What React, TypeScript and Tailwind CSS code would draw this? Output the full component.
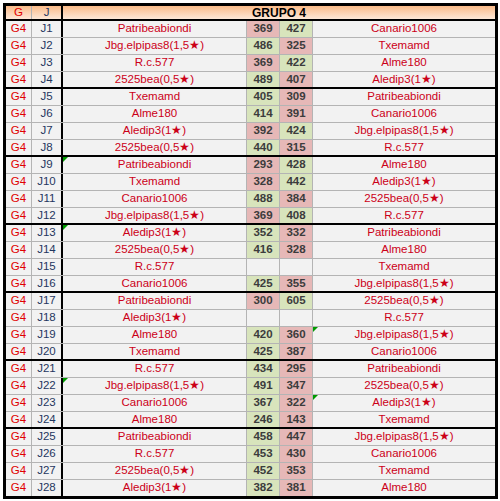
type Match = {
  j: number;
  home: string;
  a?: number;
  b?: number;
  away: string;
  markHome?: boolean;
  markAway?: boolean;
};

const matches: Match[] = [
  { j: 1, home: "Patribeabiondi", a: 369, b: 427, away: "Canario1006" },
  { j: 2, home: "Jbg.elpipas8(1,5★)", a: 486, b: 325, away: "Txemamd" },
  { j: 3, home: "R.c.577", a: 369, b: 422, away: "Alme180" },
  { j: 4, home: "2525bea(0,5★)", a: 489, b: 407, away: "Aledip3(1★)" },
  { j: 5, home: "Txemamd", a: 405, b: 309, away: "Patribeabiondi" },
  { j: 6, home: "Alme180", a: 414, b: 391, away: "Canario1006" },
  { j: 7, home: "Aledip3(1★)", a: 392, b: 424, away: "Jbg.elpipas8(1,5★)" },
  { j: 8, home: "2525bea(0,5★)", a: 440, b: 315, away: "R.c.577" },
  { j: 9, home: "Patribeabiondi", a: 293, b: 428, away: "Alme180", markHome: true },
  { j: 10, home: "Txemamd", a: 328, b: 442, away: "Aledip3(1★)" },
  { j: 11, home: "Canario1006", a: 488, b: 384, away: "2525bea(0,5★)" },
  { j: 12, home: "Jbg.elpipas8(1,5★)", a: 369, b: 408, away: "R.c.577" },
  { j: 13, home: "Aledip3(1★)", a: 352, b: 332, away: "Patribeabiondi", markHome: true },
  { j: 14, home: "2525bea(0,5★)", a: 416, b: 328, away: "Alme180" },
  { j: 15, home: "R.c.577", away: "Txemamd" },
  { j: 16, home: "Canario1006", a: 425, b: 355, away: "Jbg.elpipas8(1,5★)" },
  { j: 17, home: "Patribeabiondi", a: 300, b: 605, away: "2525bea(0,5★)" },
  { j: 18, home: "Aledip3(1★)", away: "R.c.577" },
  { j: 19, home: "Alme180", a: 420, b: 360, away: "Jbg.elpipas8(1,5★)", markAway: true },
  { j: 20, home: "Txemamd", a: 425, b: 387, away: "Canario1006" },
  { j: 21, home: "R.c.577", a: 434, b: 295, away: "Patribeabiondi" },
  { j: 22, home: "Jbg.elpipas8(1,5★)", a: 491, b: 347, away: "2525bea(0,5★)", markHome: true },
  { j: 23, home: "Canario1006", a: 367, b: 322, away: "Aledip3(1★)", markAway: true },
  { j: 24, home: "Alme180", a: 246, b: 143, away: "Txemamd" },
  { j: 25, home: "Patribeabiondi", a: 458, b: 447, away: "Jbg.elpipas8(1,5★)" },
  { j: 26, home: "R.c.577", a: 453, b: 430, away: "Canario1006" },
  { j: 27, home: "2525bea(0,5★)", a: 452, b: 353, away: "Txemamd" },
  { j: 28, home: "Aledip3(1★)", a: 382, b: 381, away: "Alme180" },
];

const Mark = () => (
  <span className="absolute left-0 top-0 w-0 h-0 border-t-[5px] border-t-[#009a00] border-r-[5px] border-r-transparent" />
);

const scoreBg = (mine?: number, other?: number) => {
  if (mine === undefined || other === undefined) return "bg-[#f2f2f2]";
  return mine > other ? "bg-[#d8e4bc]" : "bg-[#e6b8b7]";
};

const Row = ({ m, last }: { m: Match; last: boolean }) => {
  const rowBorder = last
    ? "h-[16px]"
    : m.j % 4 === 0
    ? "h-[17px] border-b-2 border-black"
    : "h-[17px] border-b border-[#b4b4b4]";

  return (
    <div className={`flex bg-[#f2f2f2] leading-none ${rowBorder}`}>
      <div className="w-[26px] flex items-center justify-center border-r border-[#b4b4b4] text-[#e00000]">
        G4
      </div>
      <div className="w-[31px] flex items-center justify-center border-r-2 border-black text-[#1f3660]">
        J{m.j}
      </div>
      <div className="relative w-[184px] flex items-center justify-center border-r border-[#b4b4b4] text-[#cc0018]">
        {m.markHome && <Mark />}
        {m.home}
      </div>
      <div
        className={`w-[33px] flex items-center justify-center border-r border-[#b4b4b4] font-bold text-[#3c3c3c] ${scoreBg(m.a, m.b)}`}
      >
        {m.a}
      </div>
      <div
        className={`w-[33px] flex items-center justify-center border-r border-[#b4b4b4] font-bold text-[#3c3c3c] ${scoreBg(m.b, m.a)}`}
      >
        {m.b}
      </div>
      <div className="relative flex-1 flex items-center justify-center text-[#cc0018]">
        {m.markAway && <Mark />}
        {m.away}
      </div>
    </div>
  );
};

export default function App() {
  return (
    <div className="w-[500px] h-[501px] bg-white pt-[3px] pl-[3px] font-['Liberation_Sans',Arial,sans-serif] text-[11.5px]">
      <div className="w-[495px] border-[3px] border-black">
        <div className="flex h-[15px] border-b-2 border-black bg-gradient-to-b from-[#fabb88] to-[#fde8d8] leading-none">
          <div className="w-[26px] flex items-center justify-center border-r border-[#b4b4b4] text-[#e00000]">
            G
          </div>
          <div className="w-[31px] flex items-center justify-center border-r-2 border-black text-[#1f3660]">
            J
          </div>
          <div className="flex-1 flex items-center justify-center font-bold text-black text-[12px]">
            GRUPO 4
          </div>
        </div>
        {matches.map((m, i) => (
          <Row key={m.j} m={m} last={i === matches.length - 1} />
        ))}
      </div>
    </div>
  );
}
